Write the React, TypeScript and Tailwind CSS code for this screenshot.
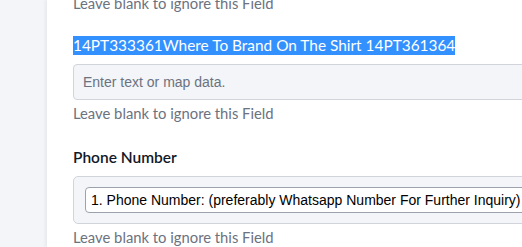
const hint = "Leave blank to ignore this Field";

function Hint() {
  return (
    <p className="text-[14.8px] leading-[20px] text-[#6b7280] font-['Lato',sans-serif]">
      {hint}
    </p>
  );
}

export default function App() {
  return (
    <div className="flex h-[247px] w-[522px] overflow-hidden bg-[#f3f5f8]">
      <div className="w-[47px] shrink-0" />
      <div className="flex-1 bg-white pl-[26px] shadow-[-2px_0_3px_rgba(0,0,0,0.05)] font-['Lato',sans-serif]">
        <div className="-mt-[7px]">
          <Hint />
        </div>
        <div className="mt-[23px] flex">
          <span className="inline-block bg-[#3390ff] text-[15.4px] leading-[19px] text-white">
            14PT333361Where To Brand On The Shirt 14PT361364
          </span>
        </div>
        <div className="mt-[9px] -mr-[10px] flex h-[36px] items-center rounded-[4px] border border-[#d1d5db] bg-[#f3f5f8] pl-[9px]">
          <span className="font-['Liberation_Sans',Arial,sans-serif] text-[14px] text-[#6b7280]">
            Enter text or map data.
          </span>
        </div>
        <div className="mt-[3px]">
          <Hint />
        </div>
        <div className="mt-[24px] flex">
          <span className="text-[15.5px] font-semibold leading-[20px] text-[#111827]">
            Phone Number
          </span>
        </div>
        <div className="mt-[9px] -mr-[10px] rounded-[5px] border border-[#d1d5db] bg-[#f3f5f8] py-[10px] pl-[11px]">
          <div className="flex h-[26px] items-center rounded-[4px] border border-[#9ca3af] bg-white pl-[5px]">
            <span className="whitespace-nowrap font-['Liberation_Sans',Arial,sans-serif] text-[14px] text-black">
              1. Phone Number: (preferably Whatsapp Number For Further Inquiry)
            </span>
          </div>
        </div>
        <div className="mt-[3px]">
          <Hint />
        </div>
      </div>
    </div>
  );
}
